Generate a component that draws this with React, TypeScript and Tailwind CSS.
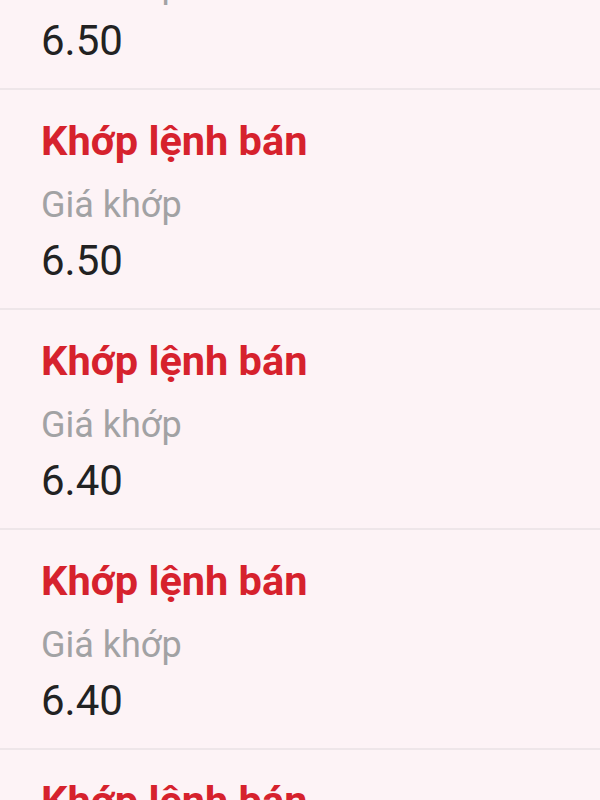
import React from "react";

const rows = ["6.50", "6.50", "6.40", "6.40", "6.40"];

export default function App() {
  return (
    <div
      className="w-[600px] h-[800px] overflow-hidden bg-[#fdf3f6]"
      style={{ fontFamily: "Roboto, 'Noto Sans', sans-serif" }}
    >
      <div className="mt-[-130px] flex flex-col">
        {rows.map((v, i) => (
          <div
            key={i}
            className="flex flex-col pl-[41px] pt-[26px] pb-[22px] border-b-2 border-[#eee6e9]"
          >
            <div className="text-[41.5px] leading-[50px] font-bold text-[#d6222d]">
              Khớp lệnh bán
            </div>
            <div className="mt-[18px] text-[36px] leading-[42px] text-[#a2a2a4]">
              Giá khớp
            </div>
            <div className="mt-[10px] text-[42px] leading-[50px] text-[#222222]">
              {v}
            </div>
          </div>
        ))}
      </div>
    </div>
  );
}
